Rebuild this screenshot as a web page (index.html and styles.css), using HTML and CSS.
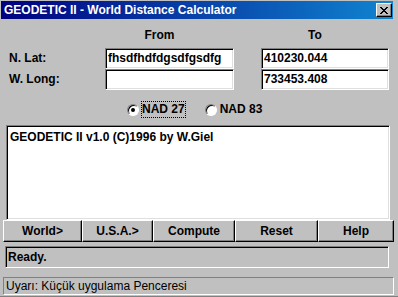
FILE: index.html
```html
<!DOCTYPE html>
<html lang="tr">
<head>
    <meta charset="UTF-8">
    <title>GEODETIC II - World Distance Calculator</title>
    <link rel="stylesheet" href="styles.css">
</head>
<body>
    <div class="window">
        <div class="titlebar">
            <span class="title">GEODETIC II - World Distance Calculator</span>
            <span class="close">
                <svg width="8" height="7" viewBox="0 0 8 7" shape-rendering="crispEdges">
                    <path d="M0 0h2v1h-2z M6 0h2v1h-2z M1 1h2v1h-2z M5 1h2v1h-2z M2 2h4v1h-4z M3 3h2v1h-2z M2 4h4v1h-4z M1 5h2v1h-2z M5 5h2v1h-2z M0 6h2v1h-2z M6 6h2v1h-2z" fill="#000"/>
                </svg>
            </span>
        </div>

        <div class="coords">
            <div></div>
            <div class="colhead">From</div>
            <div class="colhead">To</div>

            <div class="label">N. Lat:</div>
            <div class="field">fhsdfhdfdgsdfgsdfg</div>
            <div class="field">410230.044</div>

            <div class="label">W. Long:</div>
            <div class="field"></div>
            <div class="field">733453.408</div>
        </div>

        <div class="datums">
            <div class="option">
                <span class="radio checked"></span>
                <span class="option-text focused">NAD 27</span>
            </div>
            <div class="option">
                <span class="radio"></span>
                <span class="option-text">NAD 83</span>
            </div>
        </div>

        <div class="output">GEODETIC II v1.0 (C)1996 by W.Giel</div>

        <div class="buttons">
            <div class="btn">World&gt;</div>
            <div class="btn">U.S.A.&gt;</div>
            <div class="btn">Compute</div>
            <div class="btn">Reset</div>
            <div class="btn">Help</div>
        </div>

        <div class="status">Ready.</div>

        <div class="applet-warning">Uyarı: Küçük uygulama Penceresi</div>
    </div>
</body>
</html>
```

FILE: styles.css
```css
body {
    margin: 0;
    background-color: #c0c0c0;
    font-family: "Liberation Sans", Arial, sans-serif;
    font-size: 12px;
    font-weight: bold;
    color: #000;
}

.window {
    width: 398px;
    height: 297px;
    box-sizing: border-box;
    padding-top: 1px;
    background-color: #c0c0c0;
    box-shadow: inset 0 -1px #808080;
    overflow: hidden;
}

.titlebar {
    margin-left: 1px;
    width: 392px;
    height: 18px;
    box-sizing: border-box;
    padding: 0 1px 0 3px;
    display: flex;
    align-items: center;
    justify-content: space-between;
    background: linear-gradient(to right, #000080, #1084d0);
    color: #fff;
    line-height: 18px;
}

.close {
    width: 16px;
    height: 14px;
    box-sizing: border-box;
    display: flex;
    align-items: center;
    justify-content: center;
    background-color: #c0c0c0;
    border-top: 1px solid #fff;
    border-left: 1px solid #fff;
    border-right: 1px solid #000;
    border-bottom: 1px solid #000;
    box-shadow: inset -1px -1px #808080;
}

.coords {
    margin: 9px 0 0 9px;
    display: grid;
    grid-template-columns: 96px 129px 27px 128px;
    grid-template-rows: 20px 21px 21px;
}

.coords > :nth-child(3n) {
    grid-column: 4;
}

.colhead {
    line-height: 14px;
    text-align: center;
    padding-right: 20px;
}

.label {
    line-height: 21px;
}

.field {
    height: 21px;
    box-sizing: border-box;
    padding-left: 2px;
    line-height: 19px;
    background-color: #fff;
    border-top: 1px solid #808080;
    border-left: 1px solid #808080;
    border-right: 1px solid #fff;
    border-bottom: 1px solid #fff;
    box-shadow: inset 1px 1px #000, inset -1px -1px #dfdfdf;
    white-space: nowrap;
    overflow: hidden;
}

.datums {
    margin-top: 11px;
    height: 17px;
    padding-left: 127px;
    display: flex;
    align-items: center;
    gap: 19px;
}

.option {
    display: flex;
    align-items: center;
    gap: 2px;
}

.radio {
    position: relative;
    width: 12px;
    height: 12px;
    box-sizing: border-box;
    border-radius: 50%;
    background-color: #fff;
    border: 1px solid;
    border-color: #808080 #fff #fff #808080;
    box-shadow: inset 1px 1px #000;
}

.radio.checked::after {
    content: "";
    position: absolute;
    left: 3px;
    top: 3px;
    width: 4px;
    height: 4px;
    border-radius: 50%;
    background-color: #000;
}

.option-text {
    line-height: 15px;
    border: 1px dotted transparent;
}

.option-text.focused {
    border-color: #000;
}

.output {
    margin: 7px 0 0 6px;
    width: 384px;
    height: 95px;
    box-sizing: border-box;
    padding: 4px 3px;
    line-height: 14px;
    background-color: #fff;
    border-top: 1px solid #808080;
    border-left: 1px solid #808080;
    border-right: 1px solid #fff;
    border-bottom: 1px solid #fff;
    box-shadow: inset 1px 1px #000, inset -1px -1px #dfdfdf;
}

.buttons {
    margin-left: 3px;
    height: 22px;
    display: grid;
    grid-template-columns: 79px 71px 82px 83px 76px;
}

.btn {
    box-sizing: border-box;
    text-align: center;
    line-height: 20px;
    border-top: 1px solid #fff;
    border-left: 1px solid #fff;
    border-right: 1px solid #000;
    border-bottom: 1px solid #000;
    box-shadow: inset -1px -1px #808080;
}

.status {
    margin: 4px 0 0 5px;
    width: 384px;
    height: 22px;
    box-sizing: border-box;
    padding-left: 2px;
    line-height: 20px;
    border-top: 1px solid #808080;
    border-left: 1px solid #808080;
    border-right: 1px solid #fff;
    border-bottom: 1px solid #fff;
    box-shadow: inset 1px 1px #000;
}

.applet-warning {
    margin: 9px 0 0 3px;
    width: 391px;
    height: 18px;
    box-sizing: border-box;
    padding-left: 2px;
    line-height: 16px;
    font-weight: normal;
    border-top: 1px solid #808080;
    border-left: 1px solid #808080;
    border-right: 1px solid #fff;
    border-bottom: 1px solid #fff;
}
```
